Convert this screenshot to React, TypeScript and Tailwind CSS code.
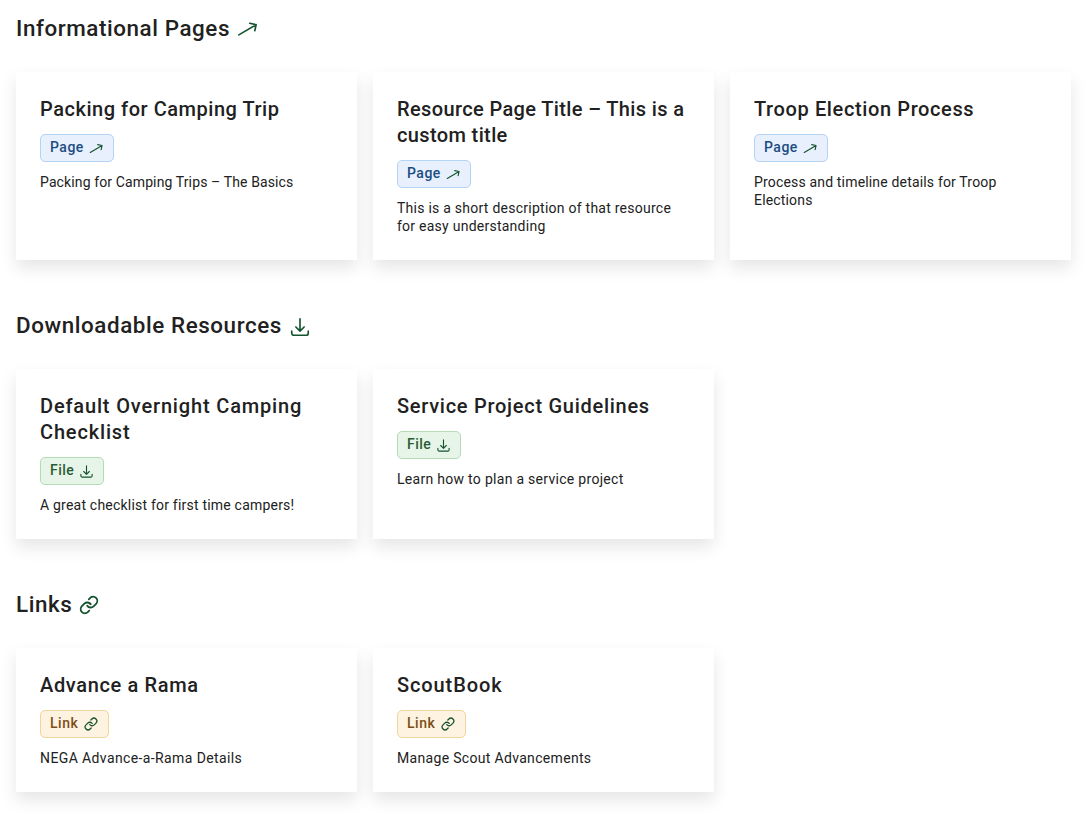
import type { ReactNode } from 'react'
import clsx from 'clsx'

type Kind = 'page' | 'file' | 'link'

interface Resource {
  title: string
  description: string
  titleClass: string
  descriptionClass: string
}

interface Section {
  kind: Kind
  heading: string
  iconClass: string
  items: Resource[]
}

const sections: Section[] = [
  {
    kind: 'page',
    heading: 'Informational Pages',
    iconClass: 'mt-[2px] size-[22px]',
    items: [
      {
        title: 'Packing for Camping Trip',
        description: 'Packing for Camping Trips – The Basics',
        titleClass: 'tracking-[0.53px]',
        descriptionClass: 'tracking-[0.12px]'
      },
      {
        title: 'Resource Page Title – This is a custom title',
        description: 'This is a short description of that resource for easy understanding',
        titleClass: 'tracking-[0.37px]',
        descriptionClass: 'tracking-[0.25px]'
      },
      {
        title: 'Troop Election Process',
        description: 'Process and timeline details for Troop Elections',
        titleClass: 'tracking-[0.62px]',
        descriptionClass: 'tracking-[0.17px]'
      }
    ]
  },
  {
    kind: 'file',
    heading: 'Downloadable Resources',
    iconClass: 'mt-[3px] size-[22px]',
    items: [
      {
        title: 'Default Overnight Camping Checklist',
        description: 'A great checklist for first time campers!',
        titleClass: 'tracking-[0.84px]',
        descriptionClass: 'tracking-[0.21px]'
      },
      {
        title: 'Service Project Guidelines',
        description: 'Learn how to plan a service project',
        titleClass: 'tracking-[0.72px]',
        descriptionClass: 'tracking-[0.29px]'
      }
    ]
  },
  {
    kind: 'link',
    heading: 'Links',
    iconClass: 'mt-px size-5',
    items: [
      {
        title: 'Advance a Rama',
        description: 'NEGA Advance-a-Rama Details',
        titleClass: 'tracking-[0.65px]',
        descriptionClass: 'tracking-[0.39px]'
      },
      {
        title: 'ScoutBook',
        description: 'Manage Scout Advancements',
        titleClass: 'tracking-[0.9px]',
        descriptionClass: 'tracking-[0.32px]'
      }
    ]
  }
]

const badges: Record<Kind, { label: string; className: string }> = {
  page: { label: 'Page', className: 'w-[74px] bg-[#e8f0fd] border-[#b5d3f2] text-[#1b4c82]' },
  file: { label: 'File', className: 'w-16 bg-[#e7f5e8] border-[#b3dbb6] text-[#2a5c34]' },
  link: { label: 'Link', className: 'w-[69px] bg-[#fef2e1] border-[#f0d59c] text-[#7c4f16]' }
}

const iconPaths: Record<Kind, ReactNode> = {
  page: <path d="M2 18.4 20.9 7.3M13.9 5.8l7 1.5-1.5 6.6" />,
  file: (
    <path d="M3 16.5v2.25A2.25 2.25 0 0 0 5.25 21h13.5A2.25 2.25 0 0 0 21 18.75V16.5M16.5 12 12 16.5m0 0L7.5 12m4.5 4.5V3" />
  ),
  link: (
    <path d="M10 13a5 5 0 0 0 7.54.54l3-3a5 5 0 0 0-7.07-7.07l-1.72 1.71M14 11a5 5 0 0 0-7.54-.54l-3 3a5 5 0 0 0 7.07 7.07l1.71-1.71" />
  )
}

function KindIcon({ kind, className }: { kind: Kind; className: string }) {
  return (
    <svg
      viewBox="0 0 24 24"
      fill="none"
      stroke="#14532d"
      strokeWidth={kind === 'link' ? 2.2 : 1.8}
      strokeLinecap="round"
      strokeLinejoin="round"
      className={clsx('shrink-0', className)}
    >
      {iconPaths[kind]}
    </svg>
  )
}

function ResourceCard({ item, kind }: { item: Resource; kind: Kind }) {
  const badge = badges[kind]

  return (
    <div className="bg-white p-6 shadow-[0_8px_16px_rgba(0,0,0,0.1)]">
      <h3 className={clsx('text-[20px] leading-[26px] font-medium', item.titleClass)}>{item.title}</h3>
      <div
        className={clsx(
          'mt-3 flex h-7 items-center justify-between rounded-[5px] border px-[9px] text-[14px] font-medium',
          badge.className
        )}
      >
        <span className="pb-[2px] leading-6 tracking-[0.5px]">{badge.label}</span>
        <KindIcon kind={kind} className={kind === 'link' ? 'mr-px size-[14px]' : 'size-[15px]'} />
      </div>
      <p className={clsx('mt-[11px] mb-px text-[14px] leading-[18px]', item.descriptionClass)}>
        {item.description}
      </p>
    </div>
  )
}

export default function App() {
  return (
    <main className="flex min-h-[817px] flex-col gap-[50px] bg-white px-4 pt-[13px] font-['Roboto','Liberation_Sans',sans-serif] text-[#212121]">
      {sections.map((section) => (
        <section key={section.kind}>
          <h2 className="mb-[29px] flex h-[30px] items-center gap-[7px] text-[22.4px] leading-7 font-medium">
            <span className="tracking-[0.58px]">{section.heading}</span>
            <KindIcon kind={section.kind} className={section.iconClass} />
          </h2>
          <div className="grid w-[1055px] grid-cols-3 gap-4">
            {section.items.map((item) => (
              <ResourceCard key={item.title} item={item} kind={section.kind} />
            ))}
          </div>
        </section>
      ))}
    </main>
  )
}
